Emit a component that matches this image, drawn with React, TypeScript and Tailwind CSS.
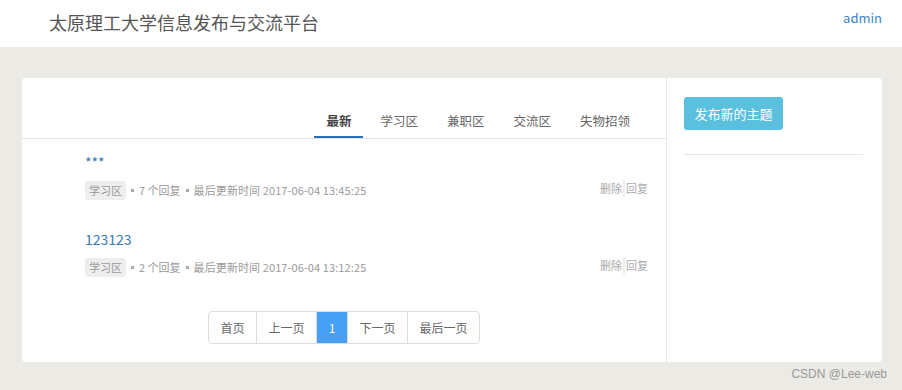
import React from "react";

const font = { fontFamily: '"Noto Sans CJK SC", "Noto Sans", sans-serif' };

function Dot() {
  return <span className="inline-block w-[3px] h-[3px] bg-[#aaa]" />;
}

function Post({ title, replies, time }: { title: string; replies: number; time: string }) {
  return (
    <div className="pl-[63px] pr-[18px]">
      <div className="text-[14px] leading-[20px] text-[#337ab7] h-[20px]">{title}</div>
      <div className="mt-[9px] flex items-center justify-between h-[19px]">
        <div className="flex items-center text-[11px] text-[#999]">
          <span className="bg-[#eeeeee] rounded-[3px] h-[19px] leading-[19px] px-[4px] text-[#999]">学习区</span>
          <span className="ml-[5px] flex items-center"><Dot /></span>
          <span className="ml-[5px] leading-[19px]">{replies} 个回复</span>
          <span className="mx-[5px] flex items-center"><Dot /></span>
          <span className="leading-[19px] tracking-[0.1px]">最后更新时间 {time}</span>
        </div>
        <div className="flex items-center text-[11px] text-[#aaa] -mt-[4px]">
          <span className="leading-[17px] pr-[1px] border-r-2 border-[#eee]">删除</span>
          <span className="leading-[17px] pl-[1px]">回复</span>
        </div>
      </div>
    </div>
  );
}

export default function App() {
  const tabs = ["最新", "学习区", "兼职区", "交流区", "失物招领"];
  const pages = ["首页", "上一页", "1", "下一页", "最后一页"];
  return (
    <div style={font} className="w-[902px] h-[390px] bg-[#ebeae4] relative overflow-hidden">
      <div className="h-[47px] bg-white flex items-start justify-between">
        <div className="pl-[49px] pt-[9px] text-[18px] leading-[26px] text-[#555]">太原理工大学信息发布与交流平台</div>
        <div className="pr-[20px] pt-[8px] text-[13px] leading-[20px] text-[#3a83c3]">admin</div>
      </div>
      <div className="mt-[31px] ml-[22px] mr-[20px] h-[284px] bg-white rounded-[4px] flex">
        <div className="w-[645px] border-r border-[#e6e6e6] flex flex-col">
          <div className="pt-[26px] border-b border-[#e5e5e5] flex justify-end pr-[24px] gap-[5px]">
            {tabs.map((t, i) => (
              <div
                key={t}
                className={
                  "px-3 h-[34px] leading-[34px] text-[12.5px] " +
                  (i === 0
                    ? "text-[#444] font-semibold border-b-2 border-[#2f6db4] -mb-[1px]"
                    : "text-[#666]")
                }
              >
                {t}
              </div>
            ))}
          </div>
          <div className="pt-[13px]">
            <Post title="***" replies={7} time="2017-06-04 13:45:25" />
            <div className="h-[29px]" />
            <Post title="123123" replies={2} time="2017-06-04 13:12:25" />
          </div>
          <div className="mt-[34px] flex justify-center">
            <div className="flex h-[33px] border border-[#ddd] rounded-[4px] overflow-hidden text-[12px] text-[#666]">
              {pages.map((p, i) => (
                <div
                  key={p}
                  className={
                    "flex items-center justify-center " +
                    (i > 0 ? "border-l border-[#ddd] " : "") +
                    (p === "1" ? "bg-[#48a0f5] text-white w-[31px] border-[#48a0f5]" : "px-[11.5px]")
                  }
                >
                  {p}
                </div>
              ))}
            </div>
          </div>
        </div>
        <div className="flex-1 pl-[17px] pr-[19px] pt-[19px]">
          <div className="w-[99px] h-[33px] bg-[#5bc0de] rounded-[3px] text-white text-[13px] flex items-center justify-center">
            发布新的主题
          </div>
          <div className="mt-[24px] border-t border-[#e5e5e5]" />
        </div>
      </div>
      <div
        className="absolute right-[15px] bottom-[7px] text-[12px] text-[#999]"
        style={{ fontFamily: '"Liberation Sans", Arial, sans-serif' }}
      >
        CSDN @Lee-web
      </div>
    </div>
  );
}
